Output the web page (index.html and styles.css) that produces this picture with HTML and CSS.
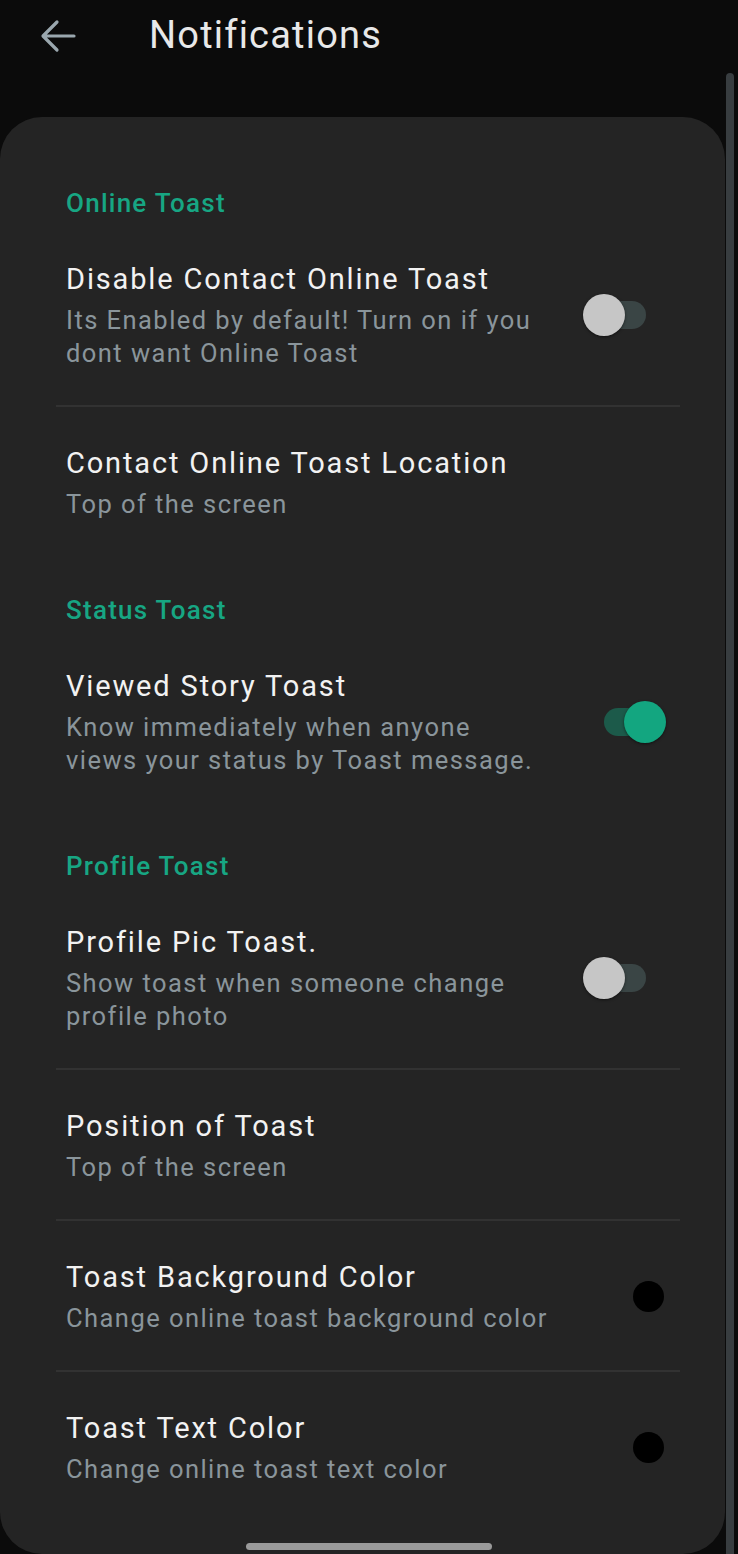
FILE: index.html
```html
<!DOCTYPE html>
<html>
<head>
<meta charset="utf-8">
<link rel="stylesheet" href="styles.css">
</head>
<body>
<div class="screen">
  <header class="appbar">
    <svg class="back" width="36" height="34" viewBox="0 0 36 34"><path d="M34 17H4M17 3L3 17l14 14" fill="none" stroke="#9aa7ae" stroke-width="3.2" stroke-linecap="round" stroke-linejoin="round"/></svg>
    <h1 class="title">Notifications</h1>
  </header>
  <div class="scrollbar"></div>
  <main class="card">
    <div class="list">
      <div class="section">Online Toast</div>
      <div class="item">
        <div class="text">
          <div class="item-title">Disable Contact Online Toast</div>
          <div class="item-sub">Its Enabled by default! Turn on if you<br>dont want Online Toast</div>
        </div>
        <div class="switch off"><span class="track"></span><span class="thumb"></span></div>
      </div>
      <div class="divider"></div>
      <div class="item">
        <div class="text">
          <div class="item-title">Contact Online Toast Location</div>
          <div class="item-sub">Top of the screen</div>
        </div>
      </div>
      <div class="section">Status Toast</div>
      <div class="item">
        <div class="text">
          <div class="item-title">Viewed Story Toast</div>
          <div class="item-sub">Know immediately when anyone<br>views your status by Toast message.</div>
        </div>
        <div class="switch on"><span class="track"></span><span class="thumb"></span></div>
      </div>
      <div class="section">Profile Toast</div>
      <div class="item">
        <div class="text">
          <div class="item-title">Profile Pic Toast.</div>
          <div class="item-sub">Show toast when someone change<br>profile photo</div>
        </div>
        <div class="switch off"><span class="track"></span><span class="thumb"></span></div>
      </div>
      <div class="divider"></div>
      <div class="item">
        <div class="text">
          <div class="item-title">Position of Toast</div>
          <div class="item-sub">Top of the screen</div>
        </div>
      </div>
      <div class="divider"></div>
      <div class="item">
        <div class="text">
          <div class="item-title">Toast Background Color</div>
          <div class="item-sub">Change online toast background color</div>
        </div>
        <div class="dot"></div>
      </div>
      <div class="divider"></div>
      <div class="item">
        <div class="text">
          <div class="item-title">Toast Text Color</div>
          <div class="item-sub">Change online toast text color</div>
        </div>
        <div class="dot"></div>
      </div>
    </div>
  </main>
  <div class="home-indicator"></div>
</div>
</body>
</html>
```

FILE: styles.css
```css
html, body {
  margin: 0;
  padding: 0;
  background: #0b0b0b;
}
body {
  font-family: Roboto, "Noto Sans", sans-serif;
  width: 738px;
  height: 1554px;
  overflow: hidden;
}
.screen {
  position: relative;
  width: 738px;
  height: 1554px;
  display: flex;
  flex-direction: column;
}
.appbar {
  height: 117px;
  display: flex;
  align-items: flex-start;
  padding-left: 40px;
  box-sizing: border-box;
}
.back {
  margin-top: 19px;
  flex: none;
}
.title {
  margin: 10px 0 0 73px;
  font-size: 38px;
  letter-spacing: 1.2px;
  font-weight: 400;
  color: #e8e8e8;
  line-height: 50px;
}
.scrollbar {
  position: absolute;
  left: 726px;
  top: 73px;
  width: 8px;
  height: 1481px;
  background: #383d40;
  border-radius: 4px 4px 0 0;
}
.card {
  width: 725px;
  flex: 1;
  background: #242424;
  border-radius: 42px;
  padding-top: 32px;
  box-sizing: border-box;
}
.list {
  margin: 0 45px 0 56px;
}
.section {
  padding: 36px 0 0 10px;
  margin-bottom: 2px;
  font-size: 26px;
  letter-spacing: 1.25px;
  line-height: 36px;
  font-weight: 500;
  color: #17a683;
}
.item {
  display: flex;
  align-items: center;
  padding: 36px 0 35px 10px;
}
.text {
  flex: 1;
  min-width: 0;
}
.item-title {
  font-size: 29px;
  letter-spacing: 1.85px;
  line-height: 40px;
  color: #f2f2f2;
  white-space: nowrap;
}
.item-sub {
  margin-top: 5px;
  font-size: 25.5px;
  letter-spacing: 1.45px;
  line-height: 33px;
  color: #8a959b;
  white-space: nowrap;
}
.divider {
  height: 2px;
  background: #323232;
}
.switch {
  position: relative;
  width: 82px;
  height: 42px;
  flex: none;
}
.switch .track {
  position: absolute;
  top: 7px;
  height: 28px;
  width: 58px;
  border-radius: 14px;
}
.switch .thumb {
  position: absolute;
  top: 0;
  width: 42px;
  height: 42px;
  border-radius: 50%;
  box-shadow: 0 1px 3px rgba(0,0,0,0.5);
}
.switch.off {
  margin-right: 30px;
}
.switch.off .track {
  left: 20px;
  background: #3a4545;
}
.switch.off .thumb {
  left: 15px;
  background: #c6c6c6;
}
.switch.on {
  margin-right: 14px;
}
.switch.on .track {
  left: 20px;
  background: #1c5a4a;
}
.switch.on .thumb {
  left: 40px;
  background: #13a680;
}
.dot {
  width: 31px;
  height: 31px;
  border-radius: 50%;
  background: #000;
  margin-right: 16px;
  flex: none;
}
.home-indicator {
  position: absolute;
  left: 246px;
  top: 1543px;
  width: 246px;
  height: 7px;
  border-radius: 4px;
  background: #9a9a9a;
}
```
